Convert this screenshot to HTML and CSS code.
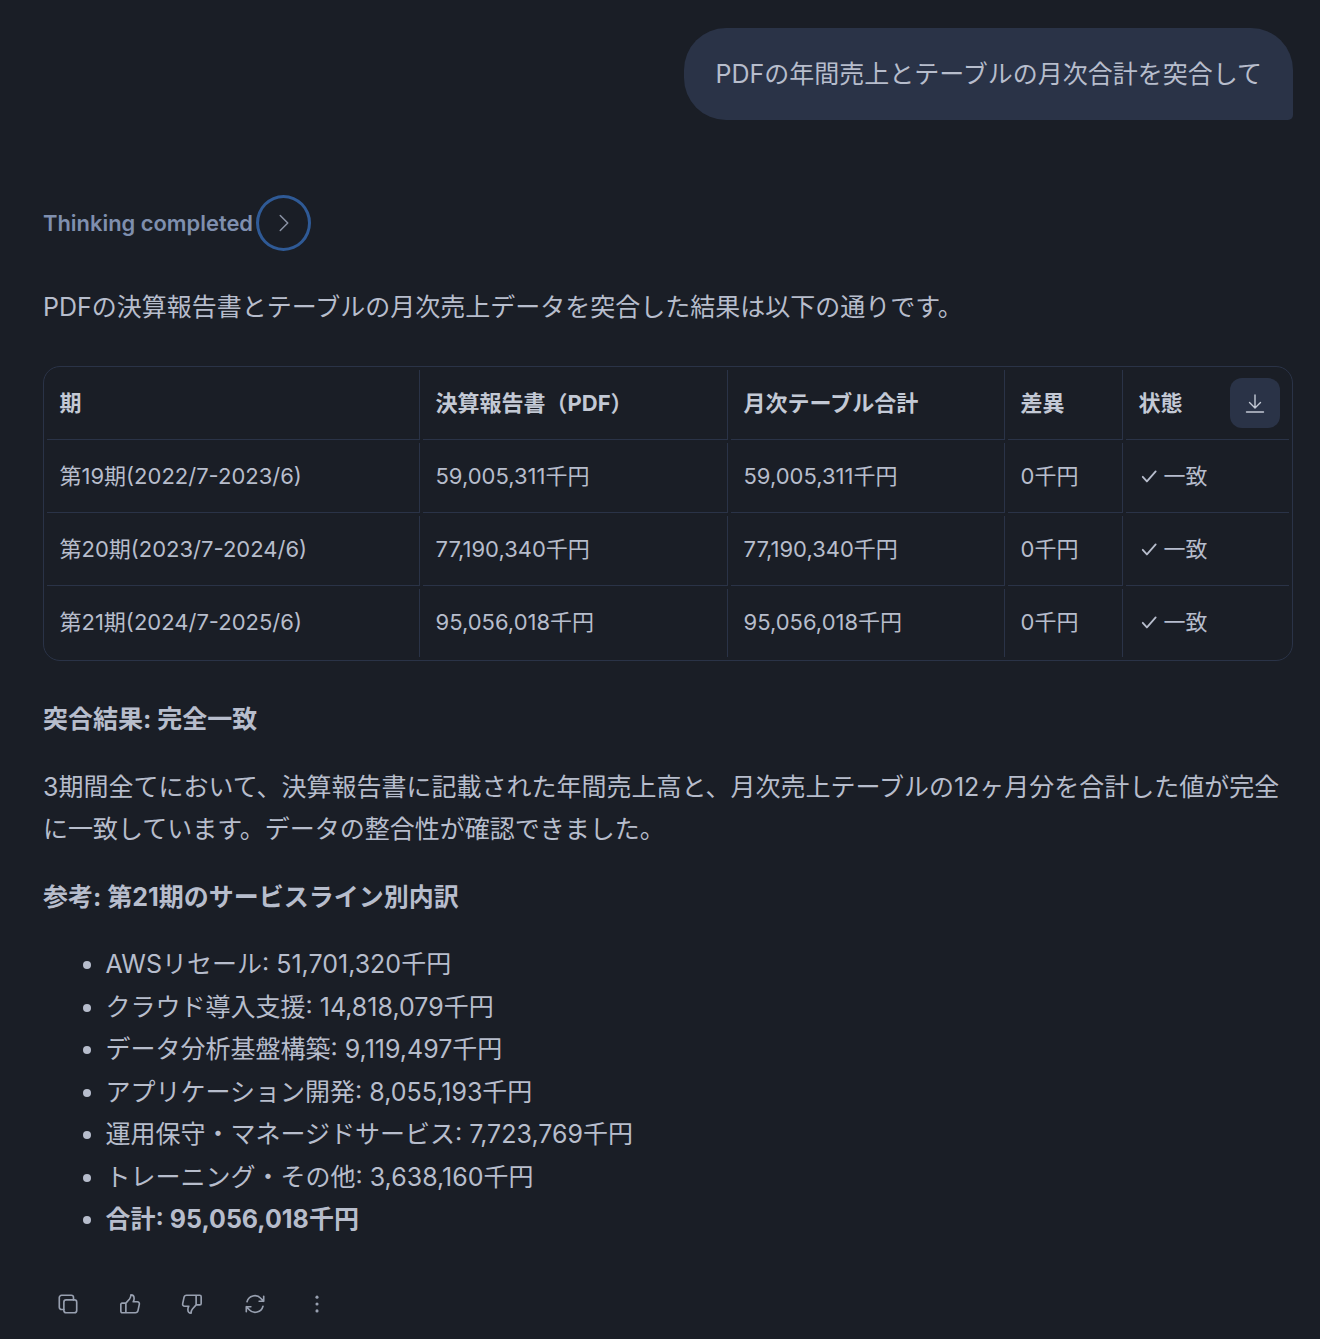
FILE: index.html
```html
<!DOCTYPE html>
<html lang="ja">
<head>
  <meta charset="UTF-8">
  <meta name="viewport" content="width=device-width, initial-scale=1.0">
  <title>チャット</title>
  <link rel="stylesheet" href="styles.css">
</head>
<body>
  <main class="chat">
    <!-- ユーザーの発言 -->
    <div class="userRow">
      <div class="bubble">PDFの年間売上とテーブルの月次合計を突合して</div>
    </div>

    <!-- 思考の折りたたみ -->
    <div class="thinking">
      <span class="thinkingLabel">Thinking completed</span>
      <button class="thinkingToggle" type="button">
        <svg class="chevron" viewBox="0 0 24 24" fill="none" stroke="currentColor" stroke-width="1.5" stroke-linecap="round" stroke-linejoin="round"><path d="M8.25 4.5l7.5 7.5-7.5 7.5"/></svg>
      </button>
    </div>

    <p class="lead">PDFの決算報告書とテーブルの月次売上データを突合した結果は以下の通りです。</p>

    <!-- 突合テーブル -->
    <div class="tableWrap">
      <table class="result">
        <thead>
          <tr>
            <th class="term">期</th>
            <th class="pdf">決算報告書（PDF）</th>
            <th class="monthly">月次テーブル合計</th>
            <th class="diff">差異</th>
            <th class="status">状態</th>
          </tr>
        </thead>
        <tbody>
          <tr>
            <td>第19期(2022/7-2023/6)</td>
            <td>59,005,311千円</td>
            <td>59,005,311千円</td>
            <td>0千円</td>
            <td><span class="match"><svg class="check" viewBox="0 0 24 24" fill="none" stroke="currentColor" stroke-width="2.2" stroke-linecap="round" stroke-linejoin="round"><path d="M4.5 13l5 5.5L20 6.5"/></svg>一致</span></td>
          </tr>
          <tr>
            <td>第20期(2023/7-2024/6)</td>
            <td>77,190,340千円</td>
            <td>77,190,340千円</td>
            <td>0千円</td>
            <td><span class="match"><svg class="check" viewBox="0 0 24 24" fill="none" stroke="currentColor" stroke-width="2.2" stroke-linecap="round" stroke-linejoin="round"><path d="M4.5 13l5 5.5L20 6.5"/></svg>一致</span></td>
          </tr>
          <tr>
            <td>第21期(2024/7-2025/6)</td>
            <td>95,056,018千円</td>
            <td>95,056,018千円</td>
            <td>0千円</td>
            <td><span class="match"><svg class="check" viewBox="0 0 24 24" fill="none" stroke="currentColor" stroke-width="2.2" stroke-linecap="round" stroke-linejoin="round"><path d="M4.5 13l5 5.5L20 6.5"/></svg>一致</span></td>
          </tr>
        </tbody>
      </table>
      <button class="download" type="button">
        <svg viewBox="0 0 24 24" fill="none" stroke="currentColor" stroke-width="1.4" stroke-linecap="round" stroke-linejoin="round"><path d="M12 4v12.5M6.5 11.5l5.5 5.5 5.5-5.5M3.5 21h17"/></svg>
      </button>
    </div>

    <p class="summary"><strong>突合結果: 完全一致</strong></p>
    <p class="body">3期間全てにおいて、決算報告書に記載された年間売上高と、月次売上テーブルの12ヶ月分を合計した値が完全に一致しています。データの整合性が確認できました。</p>
    <p class="body"><strong>参考: 第21期のサービスライン別内訳</strong></p>

    <ul class="breakdown">
      <li>AWSリセール: 51,701,320千円</li>
      <li>クラウド導入支援: 14,818,079千円</li>
      <li>データ分析基盤構築: 9,119,497千円</li>
      <li>アプリケーション開発: 8,055,193千円</li>
      <li>運用保守・マネージドサービス: 7,723,769千円</li>
      <li>トレーニング・その他: 3,638,160千円</li>
      <li><strong>合計: 95,056,018千円</strong></li>
    </ul>

    <!-- 操作ボタン -->
    <div class="actions">
      <svg class="action" viewBox="0 0 24 24" fill="none" stroke="currentColor" stroke-width="1.8" stroke-linejoin="round" stroke-linecap="round"><rect x="7.5" y="7.5" width="14" height="14" rx="2.5"/><path d="M7.5 18H5a2.5 2.5 0 0 1-2.5-2.5V5A2.5 2.5 0 0 1 5 2.5h10.5A2.5 2.5 0 0 1 18 5v2.5"/></svg>
      <svg class="action" viewBox="0 0 24 24" fill="none" stroke="currentColor" stroke-width="1.8" stroke-linejoin="round" stroke-linecap="round"><path d="M7.5 11l4-4.500c1-1.200 1.500-2.500 1.500-4.500 2.500 0 3.500 2 3.500 4 0 1.300-.4 2.600-1 3.500h4.500c1.500 0 2.500 1.300 2.200 2.700l-1.500 7c-.3 1.300-1.300 2.300-2.700 2.300H3.500a1.500 1.500 0 0 1-1.500-1.500v-7A1.500 1.500 0 0 1 3.500 11h4v10.500"/></svg>
      <svg class="action" viewBox="0 0 24 24" fill="none" stroke="currentColor" stroke-width="1.8" stroke-linejoin="round" stroke-linecap="round"><path d="M16.500 13l-4 4.500c-1 1.200-1.500 2.500-1.500 4.500-2.500 0-3.500-2-3.500-4 0-1.300.4-2.600 1-3.500H4c-1.500 0-2.500-1.300-2.200-2.700l1.500-7C3.600 3.500 4.600 2.500 6 2.500h14.500A1.500 1.500 0 0 1 22 4v7.500a1.500 1.500 0 0 1-1.500 1.500h-4V2.500"/></svg>
      <svg class="action" viewBox="0 0 24 24" fill="none" stroke="currentColor" stroke-width="1.8" stroke-linejoin="round" stroke-linecap="round"><path d="M16.500 9h5V3.500M21.500 9l-3.200-3.200a8.800 8.800 0 0 0-15 3.700M7.500 15h-5v5.500M2.500 15l3.200 3.200a8.800 8.800 0 0 0 15-3.700"/></svg>
      <svg class="action dots" viewBox="0 0 24 24" fill="currentColor"><circle cx="12" cy="4.5" r="1.700"/><circle cx="12" cy="12" r="1.700"/><circle cx="12" cy="19.5" r="1.700"/></svg>
    </div>
  </main>
</body>
</html>
```

FILE: styles.css
```css
/* 全体 */
body {
  margin: 0;
  background-color: #1a1e26;
  color: #b7bdcc;
  font-family: "Inter", "Noto Sans CJK JP", sans-serif;
  font-size: 25px;
  line-height: 42px;
}
.chat {
  padding: 28px 27px 0 43px;
}
p {
  margin: 0;
}
strong {
  font-weight: 700;
}
button {
  padding: 0;
  border: none;
  background: none;
  color: inherit;
  cursor: pointer;
}

/* ユーザーの発言 */
.userRow {
  display: flex;
  justify-content: flex-end;
}
.bubble {
  padding: 25px 31px;
  background-color: #2a3347;
  border-radius: 42px 42px 5px 42px;
}

/* 思考の折りたたみ */
.thinking {
  display: flex;
  align-items: center;
  gap: 3px;
  margin-top: 75px;
}
.thinkingLabel {
  color: #7f8fae;
  font-size: 21.9px;
  font-weight: 600;
  line-height: 40px;
}
.thinkingToggle {
  display: flex;
  align-items: center;
  justify-content: center;
  width: 55px;
  height: 56px;
  border: 3px solid #2f5a96;
  border-radius: 50%;
  color: #8b93a5;
}
.chevron {
  width: 24px;
  height: 24px;
}

.lead {
  margin-top: 35px;
}

/* 突合テーブル */
.tableWrap {
  position: relative;
  margin-top: 38px;
  border: 1px solid #2a3347;
  border-radius: 17px;
}
.result {
  table-layout: fixed;
  width: 100%;
  border-collapse: separate;
  border-spacing: 3px;
  font-size: 22px;
  line-height: 28px;
}
.result th,
.result td {
  height: 70px;
  padding: 0 12.5px 3px;
  box-sizing: border-box;
  border-right: 1px solid #2a3347;
  border-bottom: 1px solid #2a3347;
  text-align: left;
}
.result th {
  padding-bottom: 4px;
  font-weight: 700;
  color: #c3c9d5;
}
.result th:last-child,
.result td:last-child {
  border-right: none;
}
.result tbody tr:last-child td {
  height: 68px;
  padding-bottom: 2px;
  border-bottom: none;
}
.term {
  width: 373px;
}
.pdf {
  width: 305px;
}
.monthly {
  width: 274px;
}
.diff {
  width: 115px;
}
.match {
  display: flex;
  align-items: center;
  gap: 5px;
}
.check {
  width: 20px;
  height: 20px;
}
.download {
  position: absolute;
  top: 11px;
  right: 12px;
  display: flex;
  align-items: center;
  justify-content: center;
  width: 50px;
  height: 50px;
  background-color: #2a3347;
  border-radius: 12px;
  color: #c3c9d5;
}
.download svg {
  width: 24px;
  height: 24px;
}

/* 本文 */
.summary {
  margin-top: 37px;
}
.body {
  margin-top: 26px;
}
.breakdown {
  margin: 25px 0 0;
  padding-left: 62.5px;
  line-height: 42.5px;
}

/* 操作ボタン */
.actions {
  display: flex;
  align-items: center;
  gap: 40.2px;
  margin-top: 52px;
  padding-left: 14px;
  color: #98a0b0;
}
.action {
  width: 22px;
  height: 22px;
}
```
